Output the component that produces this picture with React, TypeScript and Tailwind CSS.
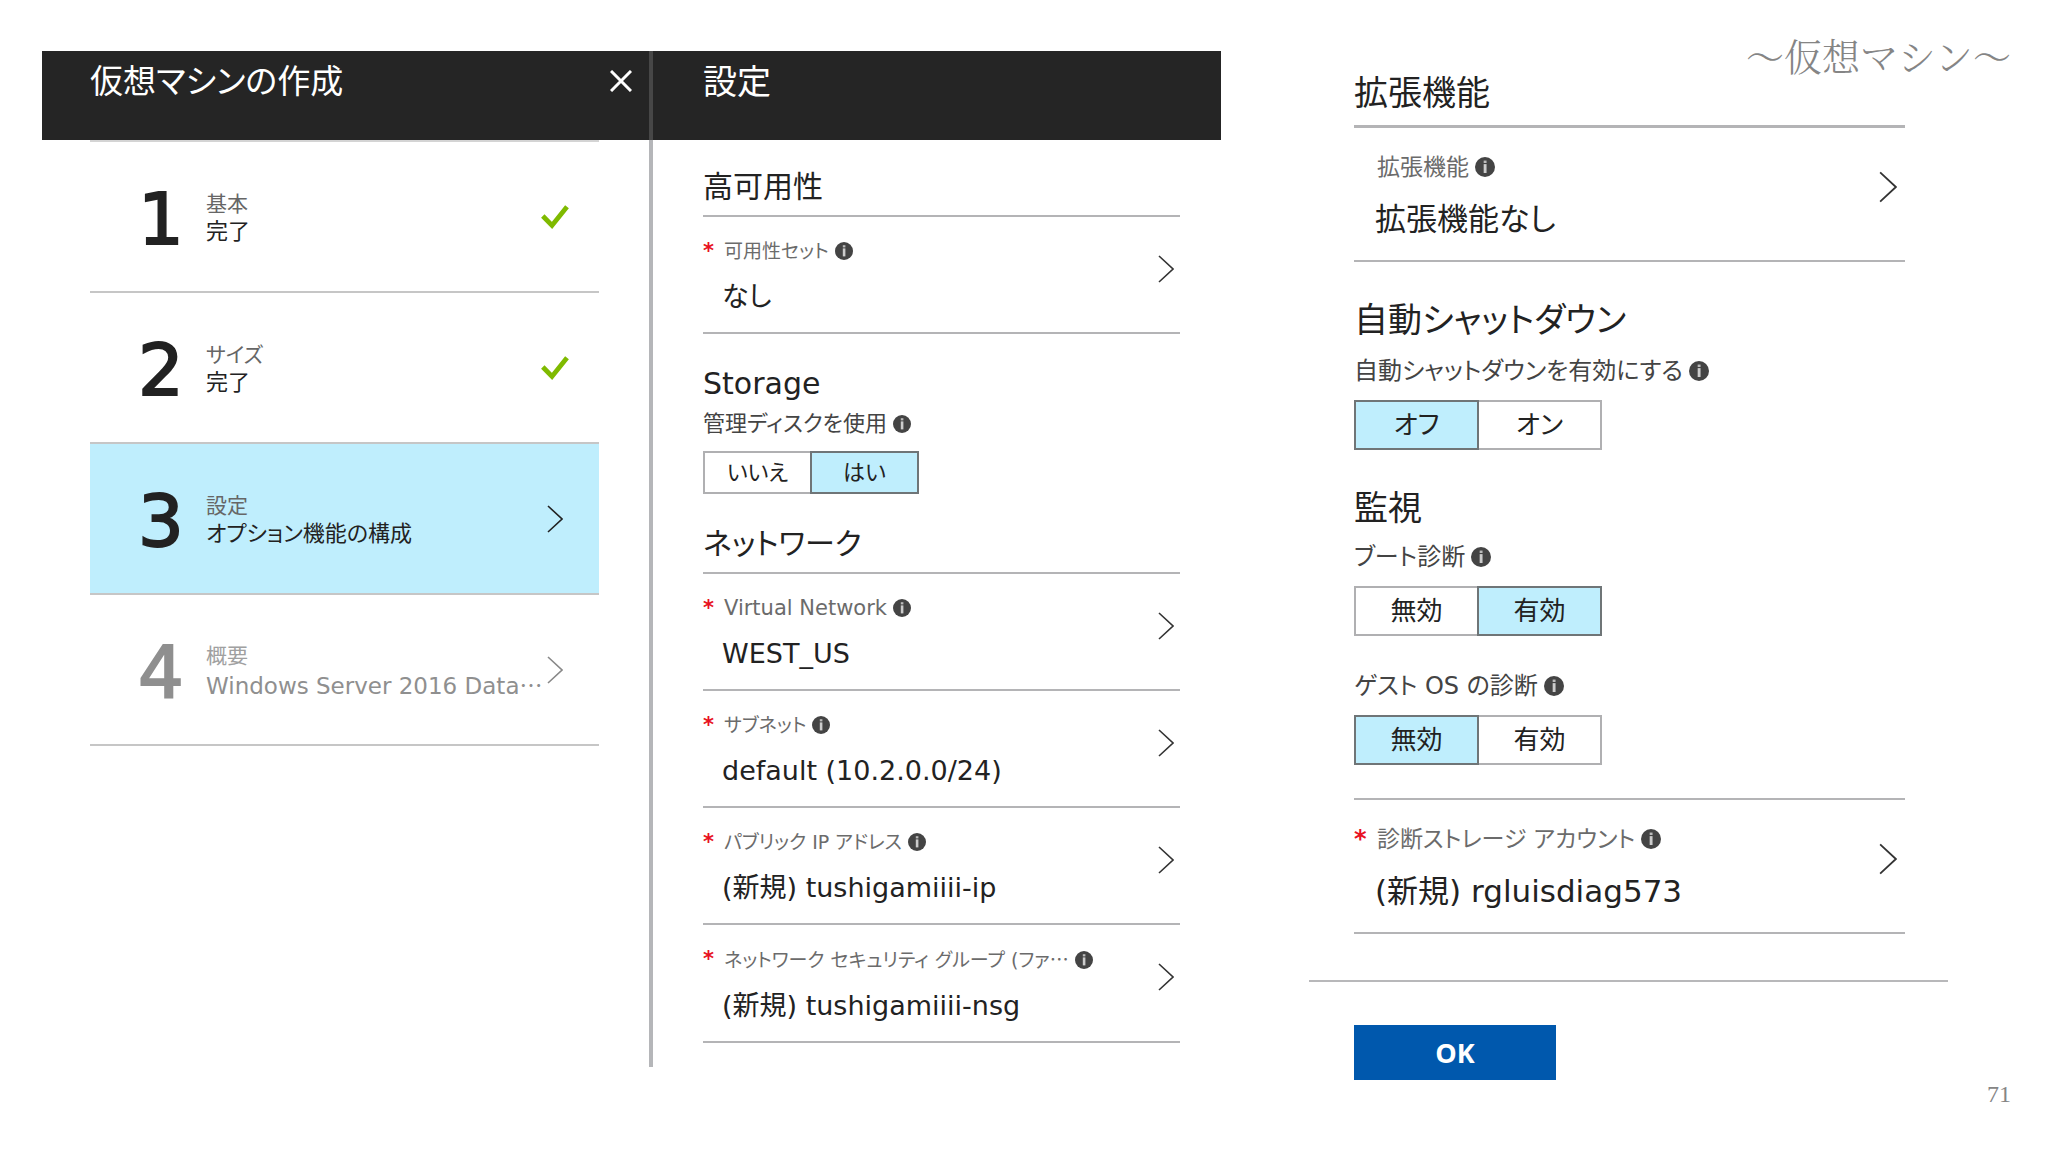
import React, { useState } from 'react';
import clsx from 'clsx';

type Size = 'md' | 'lg';

// Wizard steps in the left blade
const steps = [
  { id: 1, title: '基本', detail: '完了', status: 'done' },
  { id: 2, title: 'サイズ', detail: '完了', status: 'done' },
  { id: 3, title: '設定', detail: 'オプション機能の構成', status: 'active' },
  { id: 4, title: '概要', detail: 'Windows Server 2016 Data', status: 'disabled' },
];

const networkFields = [
  { id: 'vnet', label: 'Virtual Network', value: 'WEST_US', latin: true },
  { id: 'subnet', label: 'サブネット', value: 'default (10.2.0.0/24)' },
  { id: 'ip', label: 'パブリック IP アドレス', value: '(新規) tushigamiiii-ip' },
  { id: 'nsg', label: 'ネットワーク セキュリティ グループ (ファ', value: '(新規) tushigamiiii-nsg', truncated: true },
];

// The CJK face draws its dots at mid height
const Ellipsis: React.FC = () => (
  <span className="font-['Noto_Sans_CJK_JP',sans-serif]">…</span>
);

const InfoIcon: React.FC<{ size?: Size }> = ({ size = 'md' }) => (
  <svg viewBox="0 0 18 18" className={clsx('shrink-0', size === 'lg' ? 'size-5' : 'size-[18px]')} aria-hidden="true">
    <circle cx="9" cy="9" r="9" fill="#444" />
    <rect x="7.8" y="3.2" width="2.6" height="2.2" fill="#bbb" />
    <rect x="7.8" y="6.4" width="2.6" height="8" fill="#ccc" />
  </svg>
);

const Chevron: React.FC<{ size?: Size; color?: string }> = ({ size = 'md', color = '#333' }) => (
  <svg
    viewBox="0 0 16 28"
    className={clsx('shrink-0', size === 'lg' ? 'w-[18px] h-8' : 'w-4 h-7')}
    fill="none"
    stroke={color}
    strokeWidth="1.6"
    aria-hidden="true"
  >
    <path d="M1 1l14 13L1 27" />
  </svg>
);

const Check: React.FC = () => (
  <svg viewBox="0 0 28 24" className="w-7 h-6 shrink-0" fill="none" stroke="#7fba00" strokeWidth="4.8" aria-hidden="true">
    <path d="M1.8 11l9.2 9.4L26 1.8" />
  </svg>
);

const SectionTitle: React.FC<{ size?: Size; className?: string; children: React.ReactNode }> = ({
  size = 'md',
  className,
  children,
}) => (
  <h3 className={clsx(size === 'lg' ? 'text-[34px] leading-[34px]' : 'text-[30px] leading-[36px]', className)}>
    {children}
  </h3>
);

interface FieldProps {
  label: string;
  value: string;
  required?: boolean;
  truncated?: boolean;
  latin?: boolean;
  size?: Size;
}

const Field: React.FC<FieldProps> = ({ label, value, required, truncated, latin, size = 'md' }) => {
  const lg = size === 'lg';
  return (
    <button
      type="button"
      className={clsx(
        'flex w-full items-start border-b-2 border-[#b4b4b6] text-left',
        lg ? 'pt-[23px] pb-[19px] pr-2' : 'pt-5 pb-4 pr-1.5'
      )}
    >
      <span
        className={clsx(
          'shrink-0 font-bold text-[#e81123]',
          lg ? 'w-[23px] text-[24px] leading-8' : 'w-[21px] text-[21px] leading-7'
        )}
      >
        {required && '*'}
      </span>
      <span className="min-w-0 flex-1">
        <span
          className={clsx(
            'flex items-center gap-1.5 text-[#6b6b6b]',
            lg ? 'text-[23px] leading-8' : latin ? 'text-[21px] leading-7' : 'text-[19px] leading-7'
          )}
        >
          <span>
            {label}
            {truncated && <Ellipsis />}
          </span>
          <InfoIcon size={size} />
        </span>
        <span
          className={clsx(
            'block -ml-0.5 text-[#222]',
            lg ? 'mt-[14px] text-[31px] leading-[44px]' : 'mt-[13px] text-[27px] leading-[38px]'
          )}
        >
          {value}
        </span>
      </span>
      <span className={clsx('shrink-0', lg ? 'mt-5' : 'mt-[18px]')}>
        <Chevron size={size} />
      </span>
    </button>
  );
};

interface ToggleProps {
  id: string;
  label: string;
  options: string[];
  initial: number;
  size?: Size;
}

const Toggle: React.FC<ToggleProps> = ({ id, label, options, initial, size = 'md' }) => {
  const [selected, setSelected] = useState(initial);
  const lg = size === 'lg';

  return (
    <div>
      <div
        id={id}
        className={clsx('flex items-center gap-1.5 leading-8 text-[#444]', lg ? 'text-[24px]' : 'text-[22px]')}
      >
        {label}
        <InfoIcon size={size} />
      </div>
      <div role="group" aria-labelledby={id} className={clsx('flex', lg ? 'mt-[13px] w-[246px]' : 'mt-[11px] w-[214px]')}>
        {options.map((option, index) => (
          <button
            key={option}
            type="button"
            aria-pressed={selected === index}
            onClick={() => setSelected(index)}
            className={clsx(
              'relative flex-1 border-2 text-[#222] -mr-0.5',
              lg ? 'text-[26px] leading-[46px]' : 'text-[22px] leading-[39px]',
              selected === index ? 'z-10 border-[#6f7577] bg-[#bfeefd]' : 'border-[#b0b0b2] bg-white'
            )}
          >
            {option}
          </button>
        ))}
      </div>
    </div>
  );
};

const App: React.FC = () => {
  return (
    <main className="flex min-h-screen items-start bg-white pl-[42px] pr-[37px] font-['DejaVu_Sans','Noto_Sans_CJK_JP',sans-serif] text-[#222] [font-feature-settings:'palt']" lang="ja">
      {/* Step list */}
      <section className="mt-[51px] flex min-h-[1016px] min-w-0 flex-[611] flex-col">
        <header className="flex h-[89px] items-start justify-between border-r-4 border-[#474747] bg-[#252525] pl-12 pr-2 pt-[11px] text-white">
          <h2 className="text-[33px] leading-[40px]">仮想マシンの作成</h2>
          <button type="button" aria-label="閉じる" className="px-[9px] py-2">
            <svg viewBox="0 0 22 22" className="size-[22px]" fill="none" stroke="#fff" strokeWidth="3" aria-hidden="true">
              <path d="M1 1l20 20M21 1L1 21" />
            </svg>
          </button>
        </header>
        <div className="flex-1 border-r-4 border-[#b5b6b9] pl-12 pr-[50px]">
          <ol className="border-t-2 border-[#d4d4d4]">
            {steps.map(step => (
              <li key={step.id}>
                <button
                  type="button"
                  disabled={step.status === 'disabled'}
                  className={clsx(
                    'flex w-full items-center border-b-2 border-[#c6c6c6] py-[34px] pl-12 pr-[30px] text-left',
                    step.status === 'active' && 'bg-[#bfeefd]',
                    step.status === 'disabled' && 'text-[#8f8f8f]'
                  )}
                >
                  <span className="w-[68px] shrink-0 pt-1.5 text-[72px] leading-[75px] [-webkit-text-stroke:2px_currentColor]">
                    {step.id}
                  </span>
                  <span className="min-w-0 flex-1 whitespace-nowrap pt-0.5">
                    <span className={clsx('block text-[21px] leading-7', step.status === 'disabled' ? 'text-[#a0a0a0]' : 'text-[#666]')}>
                      {step.title}
                    </span>
                    <span className={clsx('block leading-7', step.status === 'disabled' ? 'text-[23px]' : 'text-[22px]')}>
                      {step.detail}
                      {step.status === 'disabled' && <Ellipsis />}
                    </span>
                  </span>
                  <span className="flex w-7 shrink-0 justify-center">
                    {step.status === 'done' ? <Check /> : <Chevron color={step.status === 'active' ? '#222' : '#888'} />}
                  </span>
                </button>
              </li>
            ))}
          </ol>
        </div>
      </section>

      {/* Settings blade */}
      <section className="mt-[51px] min-w-0 flex-[568]">
        <header className="h-[89px] bg-[#252525] pl-[50px] pt-[11px] text-white">
          <h2 className="text-[34px] leading-[40px]">設定</h2>
        </header>
        <div className="pl-[50px] pr-[41px] pt-[29px]">
          <SectionTitle className="border-b-2 border-[#b4b4b6] pb-[10px]">高可用性</SectionTitle>
          <Field label="可用性セット" value="なし" required />
          <SectionTitle className="mt-8">Storage</SectionTitle>
          <div className="mt-1.5">
            <Toggle id="managed-disks" label="管理ディスクを使用" options={['いいえ', 'はい']} initial={1} />
          </div>
          <SectionTitle className="mt-8 border-b-2 border-[#b4b4b6] pb-[10px]">ネットワーク</SectionTitle>
          {networkFields.map(field => (
            <Field
              key={field.id}
              label={field.label}
              value={field.value}
              truncated={field.truncated}
              latin={field.latin}
              required
            />
          ))}
        </div>
      </section>

      {/* Lower half of the settings blade */}
      <section className="ml-[88px] min-w-0 flex-[702] pt-[37px]">
        <h1 className="mb-[3px] text-right font-['Noto_Serif_CJK_JP','Noto_Sans_CJK_JP',serif] text-[38px] font-light leading-[36px] text-[#858585] [font-feature-settings:normal]">
          ～仮想マシン～
        </h1>
        <div className="pl-[45px] pr-[106px]">
          <SectionTitle size="lg" className="border-b-[3px] border-[#b4b4b6] pb-[15px]">拡張機能</SectionTitle>
          <Field size="lg" label="拡張機能" value="拡張機能なし" />
          <SectionTitle size="lg" className="mt-[41px]">自動シャットダウン</SectionTitle>
          <div className="mt-[18px]">
            <Toggle size="lg" id="auto-shutdown" label="自動シャットダウンを有効にする" options={['オフ', 'オン']} initial={0} />
          </div>
          <SectionTitle size="lg" className="mt-[41px]">監視</SectionTitle>
          <div className="mt-4">
            <Toggle size="lg" id="boot-diagnostics" label="ブート診断" options={['無効', '有効']} initial={1} />
          </div>
          <div className="mt-[34px] border-b-2 border-[#b4b4b6] pb-[33px]">
            <Toggle size="lg" id="guest-diagnostics" label="ゲスト OS の診断" options={['無効', '有効']} initial={0} />
          </div>
          <Field size="lg" label="診断ストレージ アカウント" value="(新規) rgluisdiag573" required />
        </div>
        <div className="mr-[63px] mt-[46px] border-t-2 border-[#b8b8ba] pl-[45px] pt-[43px]">
          <button type="button" className="w-[202px] bg-[#0058ad] font-['Open_Sans',sans-serif] text-[27px] font-bold leading-[55px] text-white">
            OK
          </button>
        </div>
        <footer className="text-right font-['Liberation_Serif',serif] text-[24px] leading-7 text-[#858585]">71</footer>
      </section>
    </main>
  );
};

export default App;
